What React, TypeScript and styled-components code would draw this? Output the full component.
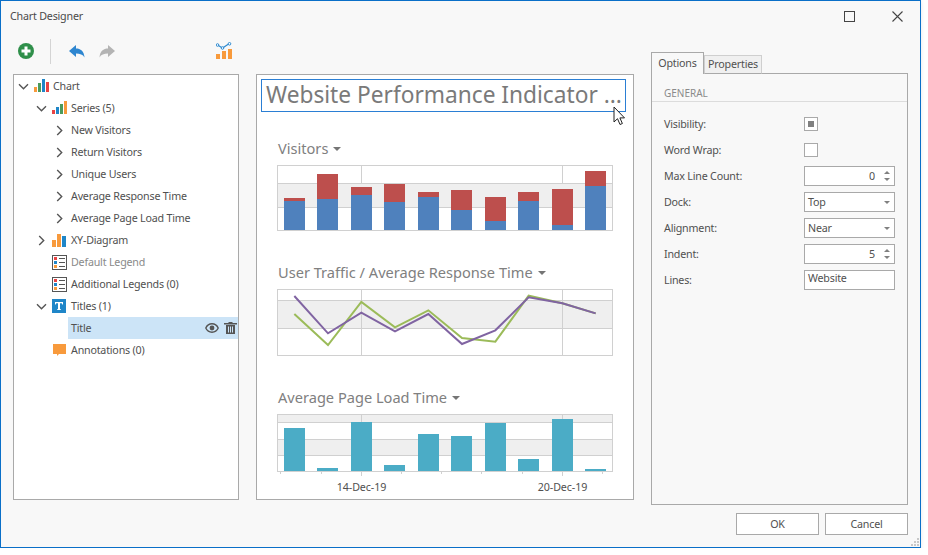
import React from "react";
import styled, { createGlobalStyle } from "styled-components";

const Global = createGlobalStyle`
  html, body { margin: 0; padding: 0; background: #fff; }
  body { font-family: "Noto Sans", "Open Sans", sans-serif; font-size: 10.7px; letter-spacing: -0.2px; color: #505050; }
  * { box-sizing: border-box; }
`;

const Window = styled.div`
  position: relative;
  width: 921px;
  height: 548px;
  background: #f8f8f8;
  border: 1px solid #0a6fc8;
  box-shadow: 0 1px 4px rgba(0, 0, 0, 0.1);
  display: flex;
  flex-direction: column;
`;
const TitleBar = styled.div`
  height: 31px;
  flex: none;
  display: flex;
  align-items: center;
  gap: 2px;
  padding-left: 9px;
  color: #4a4a4a;
`;
const Caption = styled.span`
  flex: 1;
  padding-bottom: 2px;
`;
const WinButton = styled.div`
  width: 46px;
  height: 31px;
  display: flex;
  align-items: center;
  justify-content: center;
`;
const Main = styled.div`
  flex: none;
  height: 473px;
  display: flex;
  padding-left: 12px;
`;
const LeftRegion = styled.div`
  width: 621px;
  display: flex;
  flex-direction: column;
`;
const Toolbar = styled.div`
  height: 42px;
  display: flex;
  align-items: center;
  padding: 0 0 4px 5px;
`;
const ToolButton = styled.div<{ $ml?: number }>`
  width: 16px;
  height: 18px;
  margin-left: ${p => p.$ml ?? 0}px;
  display: flex;
  align-items: center;
  justify-content: center;
`;
const ToolSep = styled.div`
  width: 1px;
  height: 25px;
  background: #d4d4d4;
  margin: 0 18px 0 16px;
`;
const Panels = styled.div`
  display: flex;
  gap: 17px;
  height: 426px;
`;
const TreePanel = styled.div`
  width: 226px;
  background: #fff;
  border: 1px solid #a9a9a9;
`;
const Row = styled.div<{ $level: number }>`
  height: 22px;
  display: flex;
  align-items: center;
  padding-left: ${p => p.$level * 18}px;
`;
const Arrow = styled.div`
  width: 18px;
  height: 22px;
  flex: none;
  display: flex;
  align-items: center;
  justify-content: center;
`;
const IconSlot = styled.div`
  width: 18px;
  height: 22px;
  flex: none;
  display: flex;
  align-items: center;
  justify-content: center;
`;
const Label = styled.div<{ $selected?: boolean; $muted?: boolean }>`
  flex: 1;
  height: 22px;
  display: flex;
  align-items: center;
  padding-left: 3px;
  background: ${p => (p.$selected ? "#cce4f7" : "transparent")};
  color: ${p => (p.$muted ? "#8a8a8a" : "#505050")};
`;
const LabelText = styled.span`flex: 1;`;
const RowActions = styled.div`
  display: flex;
  align-items: center;
  gap: 5px;
  padding-right: 1px;
`;

const ChartPanel = styled.div`
  position: relative;
  width: 378px;
  background: #fff;
  border: 1px solid #a9a9a9;
  padding: 4px 7px 0 4px;
`;
const TitleBox = styled.div`
  height: 33px;
  width: 365px;
  border: 1px solid #2b7fd4;
  display: flex;
  align-items: center;
  padding: 0 0 3px 4px;
  font-size: 22.7px;
  letter-spacing: 0;
  color: #7a7a7a;
  white-space: nowrap;
  margin-bottom: 27px;
`;
const Cursor = styled.svg`
  position: absolute;
  left: 356px;
  top: 31px;
`;
const Section = styled.section`
  padding-left: 16px;
  margin-bottom: 32px;
`;
const SectionHead = styled.div`
  height: 20px;
  margin-bottom: 6px;
  display: flex;
  align-items: center;
  gap: 5px;
  padding: 0 0 2px 1px;
  font-size: 14.600px;
  letter-spacing: 0;
  color: #808080;
`;
const Caret = styled.span`
  width: 0;
  height: 0;
  margin-top: 2px;
  border-left: 4.500px solid transparent;
  border-right: 4.500px solid transparent;
  border-top: 4px solid #757575;
`;
const Plot = styled.svg`display: block;`;
const AxisLabel = styled.text`
  font-size: 10.700px;
  letter-spacing: -0.1px;
  fill: #505050;
  text-anchor: middle;
`;

const RightRegion = styled.div`
  width: 257px;
  margin-left: 17px;
  padding-top: 20px;
  display: flex;
  flex-direction: column;
`;
const Tabs = styled.div`
  display: flex;
  align-items: flex-start;
  height: 22px;
  position: relative;
  z-index: 1;
  margin-bottom: -1px;
`;
const Tab = styled.div<{ $active?: boolean }>`
  width: ${p => (p.$active ? 53 : 58)}px;
  height: ${p => (p.$active ? 22 : 19)}px;
  margin-top: ${p => (p.$active ? 0 : 3)}px;
  padding-bottom: 2px;
  display: flex;
  align-items: center;
  justify-content: center;
  background: ${p => (p.$active ? "#f8f8f8" : "#f0f0f0")};
  border: 1px solid ${p => (p.$active ? "#a9a9a9" : "#cfcfcf")};
  border-bottom: ${p => (p.$active ? "none" : "1px solid #a9a9a9")};
  color: #505050;
`;
const OptionsPanel = styled.div`
  flex: 1;
  border: 1px solid #a9a9a9;
  background: #f8f8f8;
  padding-top: 12px;
`;
const GroupHead = styled.div`
  height: 16px;
  padding-left: 12px;
  border-bottom: 1px solid #dcdcdc;
  font-size: 10px;
  letter-spacing: 0;
  color: #8a8a8a;
  line-height: 15px;
  margin-bottom: 12px;
`;
const OptionRow = styled.div`
  height: 20px;
  margin-bottom: 6px;
  display: flex;
  align-items: center;
  padding-left: 12px;
`;
const OptionLabel = styled.div`
  width: 140px;
  flex: none;
  color: #505050;
`;
const CheckBox = styled.div<{ $checked?: boolean }>`
  width: 14px;
  height: 14px;
  margin-bottom: 1px;
  border: 1px solid #a9a9a9;
  background: #fff;
  display: flex;
  align-items: center;
  justify-content: center;
  &::after {
    content: "";
    width: 6px;
    height: 6px;
    background: ${p => (p.$checked ? "#808080" : "transparent")};
  }
`;
const Field = styled.div`
  width: 91px;
  height: 20px;
  border: 1px solid #a9a9a9;
  background: #fff;
  display: flex;
  align-items: center;
  padding: 0 3px;
  color: #505050;
`;
const FieldValue = styled.span<{ $right?: boolean; $top?: boolean }>`
  flex: 1;
  text-align: ${p => (p.$right ? "right" : "left")};
  padding-bottom: ${p => (p.$top ? 5 : 0)}px;
`;
const Spin = styled.div`
  width: 15px;
  margin: 0 -3px 0 4px;
  display: flex;
  flex-direction: column;
  align-items: center;
  gap: 4px;
`;
const SpinUp = styled.span`
  width: 0; height: 0;
  border-left: 3px solid transparent;
  border-right: 3px solid transparent;
  border-bottom: 3px solid #808080;
`;
const SpinDown = styled.span`
  width: 0; height: 0;
  border-left: 3px solid transparent;
  border-right: 3px solid transparent;
  border-top: 3px solid #808080;
`;
const DropCaret = styled.span`
  width: 0; height: 0;
  margin-right: 1px;
  border-left: 3px solid transparent;
  border-right: 3px solid transparent;
  border-top: 3px solid #808080;
`;
const Footer = styled.div`
  flex: none;
  display: flex;
  justify-content: flex-end;
  gap: 6px;
  padding: 8px 12px 0 0;
`;
const Btn = styled.div`
  width: 83px;
  height: 22px;
  border: 1px solid #a9a9a9;
  background: #fff;
  display: flex;
  align-items: center;
  justify-content: center;
  color: #505050;
`;
const Grip = styled.svg`
  position: absolute;
  right: 0;
  bottom: 0;
`;

const Chevron = ({ open }: { open?: boolean }) => (
  <svg width="11" height="11" viewBox="0 0 11 11" fill="none" stroke="#555" strokeWidth="1.4">
    {open ? <path d="M1 3.2 5.5 7.7 10 3.2" /> : <path d="M3.2 1 7.7 5.5 3.2 10" />}
  </svg>
);
const ChartIcon = () => (
  <svg width="15" height="14" viewBox="0 0 15 14">
    <rect x="0" y="8" width="3" height="5" fill="#f89a3c" />
    <rect x="4" y="4" width="3" height="9" fill="#4c9a5a" />
    <rect x="8" y="0" width="3" height="13" fill="#1f86c8" />
    <rect x="12" y="3" width="3" height="10" fill="#e84343" />
  </svg>
);
const SeriesIcon = () => (
  <svg width="15" height="14" viewBox="0 0 15 14">
    <rect x="0" y="9" width="3" height="4" fill="#e84343" />
    <rect x="4" y="6" width="3" height="7" fill="#1f86c8" />
    <rect x="8" y="3" width="3" height="10" fill="#4c9a5a" />
    <rect x="12" y="0" width="3" height="13" fill="#f89a3c" />
  </svg>
);
const XYIcon = () => (
  <svg width="14" height="13" viewBox="0 0 14 13">
    <rect x="0" y="6" width="4" height="7" fill="#f89a3c" />
    <rect x="5" y="0" width="4" height="13" fill="#f89a3c" />
    <rect x="10" y="2" width="4" height="11" fill="#1f86c8" />
  </svg>
);
const LegendIcon = () => (
  <svg width="15" height="15" viewBox="0 0 15 15">
    <rect x="0.5" y="0.5" width="14" height="14" fill="#fff" stroke="#555" />
    <rect x="2" y="2" width="3" height="3" fill="#e84343" />
    <rect x="2" y="6" width="3" height="3" fill="#1f86c8" />
    <rect x="2" y="10" width="3" height="3" fill="#f89a3c" />
    <path d="M7 3.5h6M7 7.5h6M7 11.5h6" stroke="#555" />
  </svg>
);
const TitleIcon = () => (
  <svg width="14" height="14" viewBox="0 0 14 14">
    <rect width="14" height="14" fill="#1f86c8" />
    <path d="M3 3h8v2.400h-.8l-.4-1.200H8v5.900l1 .4v.6H5v-.6l1-.4V4.200H4.200l-.4 1.200H3z" fill="#fff" />
  </svg>
);
const NoteIcon = () => (
  <svg width="13" height="13" viewBox="0 0 13 13">
    <path d="M0 0h13v10H6l-2 2v-2H0z" fill="#f89a3c" />
  </svg>
);
const EyeIcon = () => (
  <svg width="14" height="10" viewBox="0 0 14 10">
    <path d="M7 .8C4 .8 1.800 2.800.800 5c1 2.200 3.200 4.200 6.200 4.200s5.200-2 6.200-4.200C12.200 2.800 10 .8 7 .8z" fill="none" stroke="#555" strokeWidth="1.400" />
    <circle cx="7" cy="5" r="2.400" fill="#555" />
  </svg>
);
const TrashIcon = () => (
  <svg width="13" height="12" viewBox="0 0 13 12">
    <path d="M0 1h13v1.500H0zM4.500 0h4v1h-4z" fill="#555" />
    <path d="M2 3h9v9H2z" fill="#555" />
    <path d="M4.500 4.500v6M6.500 4.500v6M8.500 4.500v6" stroke="#cce4f7" />
  </svg>
);
const AddIcon = () => (
  <svg width="16" height="16" viewBox="0 0 16 16">
    <circle cx="8" cy="8" r="8" fill="#2f8f4a" />
    <path d="M6.500 3.500h3v3h3v3h-3v3h-3v-3h-3v-3h3z" fill="#fff" />
  </svg>
);
const UndoArrow = styled.svg<{ $flip?: boolean }>`
  transform: ${p => (p.$flip ? "scaleX(-1)" : "none")};
`;
const UndoIcon = ({ color, flip }: { color: string; flip?: boolean }) => (
  <UndoArrow $flip={flip} width="16" height="13" viewBox="0 0 16 13">
    <path d="M0 6 7 0v3.500c4.500 0 8 2.500 8.500 9-1.500-3-4.500-4-8.500-4V12z" fill={color} />
  </UndoArrow>
);
const WizardIcon = () => (
  <svg width="16" height="18" viewBox="0 0 16 18">
    <rect x="0" y="12" width="4" height="5" fill="#f89a3c" />
    <rect x="6" y="9" width="4" height="8" fill="#f89a3c" />
    <rect x="12" y="7" width="4" height="10" fill="#f89a3c" />
    <path d="M1.500 3 6.500 6 13 1.800" fill="none" stroke="#2e8ad0" strokeWidth="1.200" />
    <circle cx="1.500" cy="3" r="1.300" fill="#fff" stroke="#2e8ad0" />
    <circle cx="6.500" cy="6" r="1.300" fill="#fff" stroke="#2e8ad0" />
    <circle cx="13.500" cy="1.800" r="1.300" fill="#fff" stroke="#2e8ad0" />
  </svg>
);

const GRID = "#d0d0d0";
const BAND = "#efefef";
const barX = [284, 317, 351, 384, 418, 451, 485, 518, 552, 585];
const blueTop = [393, 387, 375, 396, 381, 420, 453, 393, 465, 348];
const redTop = [384, 312, 351, 342, 366, 360, 381, 366, 357, 303];
const load = [159, 279, 141, 270, 177, 183, 144, 252, 132, 282];
const purple = [[133,138],[234,250],[334,188],[435,244],[535,192],[636,282],[736,241],[836,142],[937,160],[1037,190]];
const green = [[133,192],[234,285],[334,156],[435,232],[535,181],[636,264],[736,275],[836,137],[937,160],[1037,190]];
const toY = (z: number, origin: number) => origin + z / 3;
const linePts = (pts: number[][]) => pts.map(([x, y]) => `${250 + x / 3},${250 + y / 3}`).join(" ");

const Frame = ({ top, h }: { top: number; h: number }) => (
  <rect x="277.500" y={top + 0.5} width="335" height={h - 1} fill="none" stroke={GRID} />
);
const VLines = ({ y1, y2 }: { y1: number; y2: number }) => (
  <path d={`M361.500 ${y1}V${y2}M562.500 ${y1}V${y2}`} stroke={GRID} />
);

const VisitorsPlot = () => (
  <Plot width="336" height="66" viewBox="277 165 336 66">
    <rect x="278" y="183" width="334" height="24" fill={BAND} />
    <path d="M277 183.500H612M277 207.500H612" stroke={GRID} />
    <VLines y1={165} y2={183} />
    <Frame top={165} h={66} />
    {barX.map((x, i) => (
      <g key={x}>
        <rect x={x} y={toY(redTop[i], 70)} width="21" height={toY(blueTop[i], 70) - toY(redTop[i], 70)} fill="#bd4f4d" />
        <rect x={x} y={toY(blueTop[i], 70)} width="21" height={230 - toY(blueTop[i], 70)} fill="#4f81bd" />
      </g>
    ))}
  </Plot>
);

const TrafficPlot = () => (
  <Plot width="336" height="67" viewBox="277 289 336 67">
    <rect x="278" y="300" width="334" height="28" fill={BAND} />
    <path d="M277 300.500H612M277 328.500H612" stroke={GRID} />
    <VLines y1={289} y2={355} />
    <Frame top={289} h={67} />
    <polyline points={linePts(green)} fill="none" stroke="#9bbb59" strokeWidth="2" />
    <polyline points={linePts(purple)} fill="none" stroke="#8064a2" strokeWidth="2" />
  </Plot>
);

const minorTicks = [91, 214, 454, 574, 694, 817, 1057];
const LoadPlot = () => (
  <Plot width="336" height="82" viewBox="277 414 336 82">
    <rect x="278" y="414" width="334" height="8" fill={BAND} />
    <rect x="278" y="439" width="334" height="16" fill={BAND} />
    <path d="M277 422.500H612M277 439.500H612M277 455.500H612" stroke={GRID} />
    <VLines y1={414} y2={422} />
    <path d="M277.500 414V471.500M612.500 414V471.500M277 414.500H613M277 471.500H613" stroke={GRID} fill="none" />
    {minorTicks.map(z => (
      <path key={z} d={`M${Math.round(250 + z / 3) + 0.5} 472V474`} stroke={GRID} />
    ))}
    <path d="M361.500 472V476M562.500 472V476" stroke={GRID} />
    {barX.map((x, i) => (
      <rect key={x} x={x} y={toY(load[i], 375)} width="21" height={471 - toY(load[i], 375)} fill="#4bacc6" />
    ))}
    <AxisLabel x="361.500" y="491">14-Dec-19</AxisLabel>
    <AxisLabel x="562.500" y="491">20-Dec-19</AxisLabel>
  </Plot>
);

export default function App() {
  return (
    <>
      <Global />
      <Window>
        <TitleBar>
          <Caption>Chart Designer</Caption>
          <WinButton>
            <svg width="11" height="11" viewBox="0 0 11 11"><rect x="0.500" y="0.500" width="10" height="10" fill="none" stroke="#444" /></svg>
          </WinButton>
          <WinButton>
            <svg width="11" height="11" viewBox="0 0 11 11"><path d="M.5.5l10 10M10.500.5l-10 10" stroke="#444" strokeWidth="1.100" /></svg>
          </WinButton>
        </TitleBar>
        <Main>
          <LeftRegion>
            <Toolbar>
              <ToolButton><AddIcon /></ToolButton>
              <ToolSep />
              <ToolButton><UndoIcon color="#2e86d0" /></ToolButton>
              <ToolButton $ml={14}><UndoIcon color="#b4b4b4" flip /></ToolButton>
              <ToolButton $ml={101}><WizardIcon /></ToolButton>
            </Toolbar>
            <Panels>
              <TreePanel>
                <Row $level={0}><Arrow><Chevron open /></Arrow><IconSlot><ChartIcon /></IconSlot><Label>Chart</Label></Row>
                <Row $level={1}><Arrow><Chevron open /></Arrow><IconSlot><SeriesIcon /></IconSlot><Label>Series (5)</Label></Row>
                <Row $level={2}><Arrow><Chevron /></Arrow><Label>New Visitors</Label></Row>
                <Row $level={2}><Arrow><Chevron /></Arrow><Label>Return Visitors</Label></Row>
                <Row $level={2}><Arrow><Chevron /></Arrow><Label>Unique Users</Label></Row>
                <Row $level={2}><Arrow><Chevron /></Arrow><Label>Average Response Time</Label></Row>
                <Row $level={2}><Arrow><Chevron /></Arrow><Label>Average Page Load Time</Label></Row>
                <Row $level={1}><Arrow><Chevron /></Arrow><IconSlot><XYIcon /></IconSlot><Label>XY-Diagram</Label></Row>
                <Row $level={1}><Arrow /><IconSlot><LegendIcon /></IconSlot><Label $muted>Default Legend</Label></Row>
                <Row $level={1}><Arrow /><IconSlot><LegendIcon /></IconSlot><Label>Additional Legends (0)</Label></Row>
                <Row $level={1}><Arrow><Chevron open /></Arrow><IconSlot><TitleIcon /></IconSlot><Label>Titles (1)</Label></Row>
                <Row $level={3}>
                  <Label $selected>
                    <LabelText>Title</LabelText>
                    <RowActions><EyeIcon /><TrashIcon /></RowActions>
                  </Label>
                </Row>
                <Row $level={1}><Arrow /><IconSlot><NoteIcon /></IconSlot><Label>Annotations (0)</Label></Row>
              </TreePanel>
              <ChartPanel>
                <TitleBox>Website Performance Indicator ...</TitleBox>
                <Cursor width="13" height="20" viewBox="0 0 13 20">
                  <path d="M1 1v15l3.500-3.300 2.500 5.800 2.400-1-2.500-5.600H11.500z" fill="#fff" stroke="#222" />
                </Cursor>
                <Section>
                  <SectionHead>Visitors<Caret /></SectionHead>
                  <VisitorsPlot />
                </Section>
                <Section>
                  <SectionHead>User Traffic / Average Response Time<Caret /></SectionHead>
                  <TrafficPlot />
                </Section>
                <Section>
                  <SectionHead>Average Page Load Time<Caret /></SectionHead>
                  <LoadPlot />
                </Section>
              </ChartPanel>
            </Panels>
          </LeftRegion>
          <RightRegion>
            <Tabs>
              <Tab $active>Options</Tab>
              <Tab>Properties</Tab>
            </Tabs>
            <OptionsPanel>
              <GroupHead>GENERAL</GroupHead>
              <OptionRow><OptionLabel>Visibility:</OptionLabel><CheckBox $checked /></OptionRow>
              <OptionRow><OptionLabel>Word Wrap:</OptionLabel><CheckBox /></OptionRow>
              <OptionRow><OptionLabel>Max Line Count:</OptionLabel>
                <Field><FieldValue $right>0</FieldValue><Spin><SpinUp /><SpinDown /></Spin></Field>
              </OptionRow>
              <OptionRow><OptionLabel>Dock:</OptionLabel>
                <Field><FieldValue>Top</FieldValue><DropCaret /></Field>
              </OptionRow>
              <OptionRow><OptionLabel>Alignment:</OptionLabel>
                <Field><FieldValue>Near</FieldValue><DropCaret /></Field>
              </OptionRow>
              <OptionRow><OptionLabel>Indent:</OptionLabel>
                <Field><FieldValue $right>5</FieldValue><Spin><SpinUp /><SpinDown /></Spin></Field>
              </OptionRow>
              <OptionRow><OptionLabel>Lines:</OptionLabel>
                <Field><FieldValue $top>Website</FieldValue></Field>
              </OptionRow>
            </OptionsPanel>
          </RightRegion>
        </Main>
        <Footer>
          <Btn>OK</Btn>
          <Btn>Cancel</Btn>
        </Footer>
        <Grip width="10" height="10" viewBox="0 0 10 10" fill="#c8c8c8">
          <rect x="7" y="1" width="2" height="2" />
          <rect x="4" y="4" width="2" height="2" />
          <rect x="7" y="4" width="2" height="2" />
          <rect x="1" y="7" width="2" height="2" />
          <rect x="4" y="7" width="2" height="2" />
          <rect x="7" y="7" width="2" height="2" />
        </Grip>
      </Window>
    </>
  );
}
